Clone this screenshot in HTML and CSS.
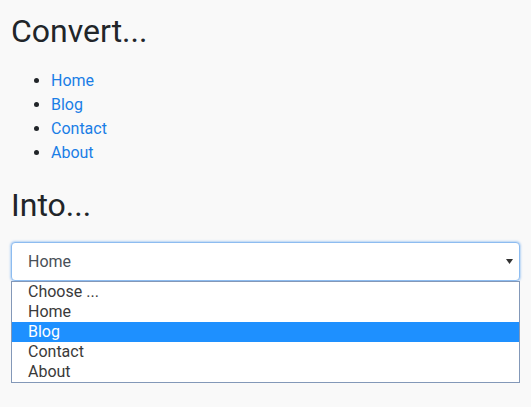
FILE: index.html
```html
<!DOCTYPE html>
<html>
<head>
    <link rel="stylesheet" href="styles.css">
</head>
<body>
<div class="page">
    <h2>Convert...</h2>
    <ul class="nav-list">
        <li><a href="#">Home</a></li>
        <li><a href="#">Blog</a></li>
        <li><a href="#">Contact</a></li>
        <li><a href="#">About</a></li>
    </ul>
    <h2>Into...</h2>
    <div class="select-wrap">
        <div class="select-box">
            <span>Home</span>
            <svg class="arrow" width="7" height="5" viewBox="0 0 7 5"><path d="M0 0h7L3.5 5z" fill="#333"/></svg>
        </div>
        <!-- open dropdown list -->
        <div class="select-popup">
            <div class="option">Choose ...</div>
            <div class="option">Home</div>
            <div class="option selected">Blog</div>
            <div class="option">Contact</div>
            <div class="option">About</div>
        </div>
    </div>
</div>
</body>
</html>
```

FILE: styles.css
```css
body {
    margin: 0;
    background-color: #f9f9f9;
    font-family: Roboto, "Liberation Sans", sans-serif;
    color: #212529;
}
.page {
    padding: 12px 11px;
}
h2 {
    font-size: 32px;
    font-weight: 400;
    line-height: 1.2;
    margin: 0;
}
.nav-list {
    margin: 19px 0 21px;
    padding-left: 40px;
    font-size: 16px;
    line-height: 24px;
}
.nav-list a {
    color: #1a7ee6;
    text-decoration: none;
}
.select-wrap {
    margin-top: 17px;
}
.select-box {
    height: 39px;
    box-sizing: border-box;
    background: #fff;
    border: 1px solid #8dbcf0;
    border-radius: 4px;
    box-shadow: 0 0 2px 1px rgba(128, 180, 240, 0.55);
    display: flex;
    align-items: center;
    justify-content: space-between;
    padding: 0 6px 0 16px;
    font-size: 16px;
    color: #495057;
}
.select-popup {
    background: #fff;
    border: 1px solid #8398b8;
    font-size: 16px;
    color: #3a3a3a;
}
.option {
    height: 20px;
    line-height: 20px;
    padding-left: 16px;
}
.option.selected {
    background-color: #1e90ff;
    color: #fff;
}
```
